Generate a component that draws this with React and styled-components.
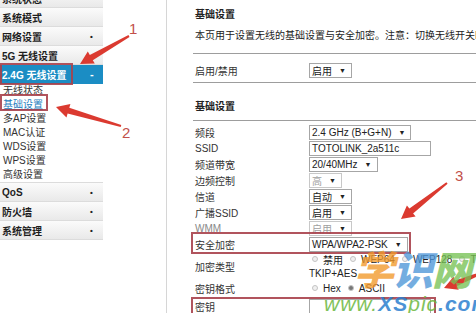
import React from "react";
import styled, { createGlobalStyle } from "styled-components";

const GlobalStyle = createGlobalStyle`
  html, body {
    margin: 0;
    padding: 0;
    width: 476px;
    height: 313px;
    overflow: hidden;
    background: #fff;
    font-family: "Liberation Sans", "Noto Sans CJK SC", sans-serif;
  }
`;

// arrow polygon: tapered shaft + triangular head
const arrowPoints = (x1, y1, x2, y2, head = 13, half = 7, tail = 1, shaft = 3) => {
  const dx = x2 - x1;
  const dy = y2 - y1;
  const len = Math.hypot(dx, dy);
  const ux = dx / len;
  const uy = dy / len;
  const nx = -uy;
  const ny = ux;
  const bx = x2 - ux * head;
  const by = y2 - uy * head;
  const p = (x, y) => `${x.toFixed(1)},${y.toFixed(1)}`;
  return [
    p(x1 + nx * tail, y1 + ny * tail),
    p(bx + nx * shaft, by + ny * shaft),
    p(bx + nx * half, by + ny * half),
    p(x2, y2),
    p(bx - nx * half, by - ny * half),
    p(bx - nx * shaft, by - ny * shaft),
    p(x1 - nx * tail, y1 - ny * tail),
  ].join(" ");
};

const arrows = [
  { id: "a1", from: [129, 36], to: [80, 64] },
  { id: "a2", from: [121, 126], to: [56, 107] },
  { id: "a3", from: [447, 183], to: [401, 219] },
  { id: "a4", from: [484, 272], to: [444, 288] },
];

const boxes = [
  { x: 1, y: 64, w: 71, h: 20 },
  { x: 1, y: 95, w: 46, h: 15 },
  { x: 192, y: 233, w: 218, h: 20 },
  { x: 192, y: 298, w: 243, h: 22 },
];

const sideRows = [
  { label: "系统状态" },
  { label: "系统模式" },
  { label: "网络设置", dot: true },
  { label: "5G 无线设置" },
];

const subItems = ["无线状态", "基础设置", "多AP设置", "MAC认证", "WDS设置", "WPS设置", "高级设置"];

const App = () => {
  return (
    <Page>
      <GlobalStyle />
      <Sidebar>
        {sideRows.map((r) => (
          <NavRow key={r.label}>
            {r.label}
            {r.dot && <Dot>•</Dot>}
          </NavRow>
        ))}
        <NavRow $active>
          2.4G 无线设置
          <Dot $active>-</Dot>
        </NavRow>
        <SubMenu>
          {subItems.map((s) => (
            <SubItem key={s} $current={s === "基础设置"}>{s}</SubItem>
          ))}
        </SubMenu>
        <NavRow>QoS<Dot>•</Dot></NavRow>
        <NavRow>防火墙<Dot>•</Dot></NavRow>
        <NavRow>系统管理<Dot>•</Dot></NavRow>
      </Sidebar>

      <Main>
        <Heading>基础设置</Heading>
        <Desc>本页用于设置无线的基础设置与安全加密。注意：切换无线开关时，无线连接会断开。</Desc>
        <Rule $top={9} />
        <FormRow $top={8}>
          <Label>启用/禁用</Label>
          <Select>启用<Caret>▼</Caret></Select>
        </FormRow>
        <Rule $top={4} />
        <Heading $top={16}>基础设置</Heading>
        <Rule $top={5} />
        <Rows>
          <FormRow>
            <Label>频段</Label>
            <Select>2.4 GHz (B+G+N)<Caret>▼</Caret></Select>
          </FormRow>
          <FormRow>
            <Label>SSID</Label>
            <TextBox>TOTOLINK_2a511c</TextBox>
          </FormRow>
          <FormRow>
            <Label>频道带宽</Label>
            <Select>20/40MHz<Caret>▼</Caret></Select>
          </FormRow>
          <FormRow>
            <Label>边频控制</Label>
            <Select $disabled>高<Caret>▼</Caret></Select>
          </FormRow>
          <FormRow>
            <Label>信道</Label>
            <Select>自动<Caret>▼</Caret></Select>
          </FormRow>
          <FormRow>
            <Label>广播SSID</Label>
            <Select>启用<Caret>▼</Caret></Select>
          </FormRow>
          <FormRow>
            <Label $muted>WMM</Label>
            <Select $disabled>启用<Caret>▼</Caret></Select>
          </FormRow>
          <FormRow>
            <Label>安全加密</Label>
            <Select>WPA/WPA2-PSK<Caret>▼</Caret></Select>
          </FormRow>
          <FormRow $tall>
            <Label>加密类型</Label>
            <Options>
              <OptionLine>
                <Radio /><span>禁用</span>
                <Radio /><span>WEP64</span>
                <Radio /><span>WEP128</span>
                <Radio /><span>TKIP</span>
              </OptionLine>
              <OptionLine $flush>TKIP+AES</OptionLine>
            </Options>
          </FormRow>
          <FormRow>
            <Label>密钥格式</Label>
            <OptionLine>
              <Radio /><span>Hex</span>
              <Radio $checked /><span>ASCII</span>
            </OptionLine>
          </FormRow>
          <FormRow $top={2}>
            <Label>密钥</Label>
            <TextBox />
          </FormRow>
        </Rows>
      </Main>

      <Overlay width="476" height="313" viewBox="0 0 476 313">
        {boxes.map((b, i) => (
          <rect key={i} x={b.x} y={b.y} width={b.w} height={b.h} fill="none" stroke="#a8414b" strokeWidth="2" strokeOpacity="0.9" />
        ))}
        {arrows.map((a) => (
          <polygon key={a.id} points={arrowPoints(a.from[0], a.from[1], a.to[0], a.to[1])} fill="#db3a30" />
        ))}
      </Overlay>

      <Num $x={129} $y={20}>1</Num>
      <Num $x={122} $y={124}>2</Num>
      <Num $x={455} $y={167}>3</Num>

      <Watermark>
        <Big>
          <Glyph $c="#f2992a">学</Glyph>
          <Glyph $c="#4e97d8">识</Glyph>
          <Glyph $c="#78c255">网</Glyph>
        </Big>
        <Site>
          <Green>www.</Green><Blue>XS</Blue><Green>pic</Green><Blue>.com</Blue>
        </Site>
      </Watermark>
    </Page>
  );
};

const Page = styled.div`
  position: relative;
  width: 476px;
  height: 313px;
  overflow: hidden;
  display: flex;
  align-items: flex-start;
  background: #fff;
`;

const Sidebar = styled.div`
  width: 103px;
  margin-top: -11px;
  display: flex;
  flex-direction: column;
`;

const NavRow = styled.div`
  height: 18px;
  border-bottom: 1px solid ${(p) => (p.$active ? "#1b8dc4" : "#dcdcdc")};
  background: ${(p) => (p.$active ? "#1b8dc4" : "linear-gradient(#fbfbfb, #e9e9e9)")};
  color: ${(p) => (p.$active ? "#fff" : "#1e1e1e")};
  font-size: 10px;
  font-weight: bold;
  display: flex;
  align-items: center;
  padding-left: 2px;
  position: relative;
`;

const Dot = styled.span`
  position: absolute;
  left: 90px;
  font-size: ${(p) => (p.$active ? "11px" : "8px")};
  color: ${(p) => (p.$active ? "#fff" : "#222")};
`;

const SubMenu = styled.div`
  display: flex;
  flex-direction: column;
  background: #fff;
  border-bottom: 1px solid #dcdcdc;
`;

const SubItem = styled.div`
  height: 14px;
  line-height: 14px;
  padding-left: 3px;
  font-size: 10px;
  color: ${(p) => (p.$current ? "#1f7fc0" : "#333")};
  text-decoration: ${(p) => (p.$current ? "underline" : "none")};
`;

const Main = styled.div`
  margin-left: 63px;
  margin-top: -11px;
  flex: 1;
  min-height: 340px;
  border-left: 1px solid #d6d6d6;
  padding: 18px 0 0 28px;
  display: flex;
  flex-direction: column;
  font-size: 10px;
  color: #333;
  white-space: nowrap;
  overflow: hidden;
`;

const Heading = styled.div`
  margin-top: ${(p) => p.$top || 0}px;
  height: 16px;
  line-height: 16px;
  font-weight: bold;
  color: #222;
`;

const Desc = styled.div`
  margin-top: 5px;
  height: 16px;
  line-height: 16px;
  color: #222;
`;

const Rule = styled.div`
  margin-top: ${(p) => p.$top || 0}px;
  margin-left: -2px;
  height: 1px;
  background: #9d9d9d;
`;

const Rows = styled.div`
  margin-top: 3px;
  display: flex;
  flex-direction: column;
`;

const FormRow = styled.div`
  margin-top: ${(p) => p.$top || 0}px;
  height: ${(p) => (p.$tall ? 28 : 16)}px;
  display: flex;
  align-items: center;
`;

const Label = styled.div`
  width: 114px;
  flex-shrink: 0;
  color: ${(p) => (p.$muted ? "#888" : "#333")};
`;

const Select = styled.div`
  height: 13px;
  display: inline-flex;
  align-items: center;
  gap: 7px;
  padding: 0 5px 0 2px;
  border: 1px solid ${(p) => (p.$disabled ? "#c8c8c8" : "#a6a6a6")};
  color: ${(p) => (p.$disabled ? "#a0a0a0" : "#222")};
  background: #fff;
  font-size: 10px;
`;

const Caret = styled.span`
  font-size: 7px;
  color: #222;
`;

const TextBox = styled.div`
  width: 118px;
  height: 13px;
  line-height: 13px;
  padding-left: 2px;
  border: 1px solid #a6a6a6;
  color: #222;
  font-size: 10px;
`;

const Options = styled.div`
  display: flex;
  flex-direction: column;
`;

const OptionLine = styled.div`
  height: 14px;
  display: flex;
  align-items: center;
  gap: 5px;
  padding-left: ${(p) => (p.$flush ? 0 : 3)}px;
  color: #222;
  font-size: 10px;
  & > span {
    margin-right: 2px;
  }
`;

const Radio = styled.i`
  width: 4px;
  height: 4px;
  border-radius: 50%;
  border: 1px solid #c4c4c4;
  background: ${(p) => (p.$checked ? "#777" : "#f0f0f0")};
  display: inline-block;
`;

const Overlay = styled.svg`
  position: absolute;
  left: 0;
  top: 0;
  pointer-events: none;
`;

const Num = styled.span`
  position: absolute;
  left: ${(p) => p.$x}px;
  top: ${(p) => p.$y}px;
  font-family: "Liberation Sans", sans-serif;
  font-size: 15px;
  color: #c2504a;
`;

const Watermark = styled.div`
  position: absolute;
  left: 322px;
  top: 245px;
  width: 156px;
  display: flex;
  flex-direction: column;
  pointer-events: none;
`;

const Big = styled.div`
  display: flex;
  padding-left: 32px;
  font-family: "Noto Sans CJK SC", sans-serif;
  font-size: 40px;
  font-weight: 900;
  font-style: italic;
  line-height: 46px;
  opacity: 0.78;
`;

const Glyph = styled.span`
  color: ${(p) => p.$c};
  width: 39px;
`;

const Site = styled.div`
  font-family: "Liberation Sans", sans-serif;
  font-size: 21px;
  font-style: italic;
  letter-spacing: 1px;
  line-height: 20px;
  margin-top: 3px;
  padding-left: 2px;
  opacity: 0.85;
`;

const Green = styled.span`
  color: #6cb83f;
`;

const Blue = styled.span`
  color: #2c7fd0;
  font-weight: bold;
`;

export default App;
